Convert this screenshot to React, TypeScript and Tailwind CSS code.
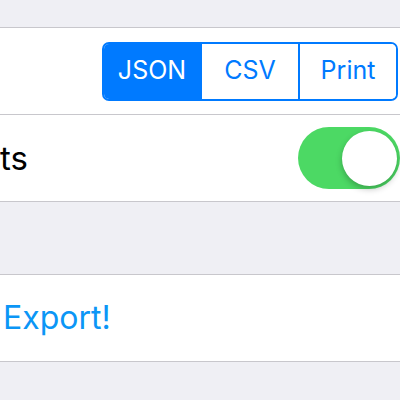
import React, { useState } from "react";

const Segments = () => {
    const [active, setActive] = useState(0)
    const items = ["JSON", "CSV", "Print"]
    return (
        <div className="flex h-[59px] w-[296px] border-2 border-[#007aff] rounded-[7px] overflow-hidden">
            {items.map((it, i) => (
                <button
                    key={it}
                    onClick={() => setActive(i)}
                    className={
                        "flex-1 flex items-center justify-center text-[25px] " +
                        (i > 0 ? "border-l-2 border-[#007aff] " : "") +
                        (active === i ? "bg-[#007aff] text-white" : "bg-white text-[#007aff]")
                    }
                >
                    {it}
                </button>
            ))}
        </div>
    )
}

const Toggle = () => {
    const [on, setOn] = useState(true)
    return (
        <button
            onClick={() => setOn(!on)}
            className={"relative w-[102px] h-[62px] rounded-full " + (on ? "bg-[#4cd964]" : "bg-[#e5e5ea]")}
        >
            <span
                className={"absolute top-[4px] w-[55px] h-[55px] rounded-full bg-white shadow-[0_3px_6px_rgba(0,0,0,0.25)] " + (on ? "left-[44px]" : "left-[3px]")}
            />
        </button>
    )
}

export default function App() {
    return (
        <div className="w-[400px] h-[400px] bg-[#efeff4] overflow-hidden" style={{ fontFamily: "Inter, 'Liberation Sans', sans-serif" }}>
            <div className="h-[27px]" />
            <div className="bg-white border-y border-[#c8c7cc]">
                <div className="h-[86px] flex items-center justify-end pr-[2px]">
                    <Segments />
                </div>
                <div className="h-[87px] flex items-center justify-between border-t border-[#c8c7cc]">
                    <span className="text-[33px] text-black leading-none">ts</span>
                    <Toggle />
                </div>
            </div>
            <div className="h-[72px]" />
            <div className="bg-white border-y border-[#c8c7cc] h-[88px] flex items-center pl-[3px]">
                <button className="text-[32px] text-[#0b96f6] leading-none">Export!</button>
            </div>
        </div>
    )
}
